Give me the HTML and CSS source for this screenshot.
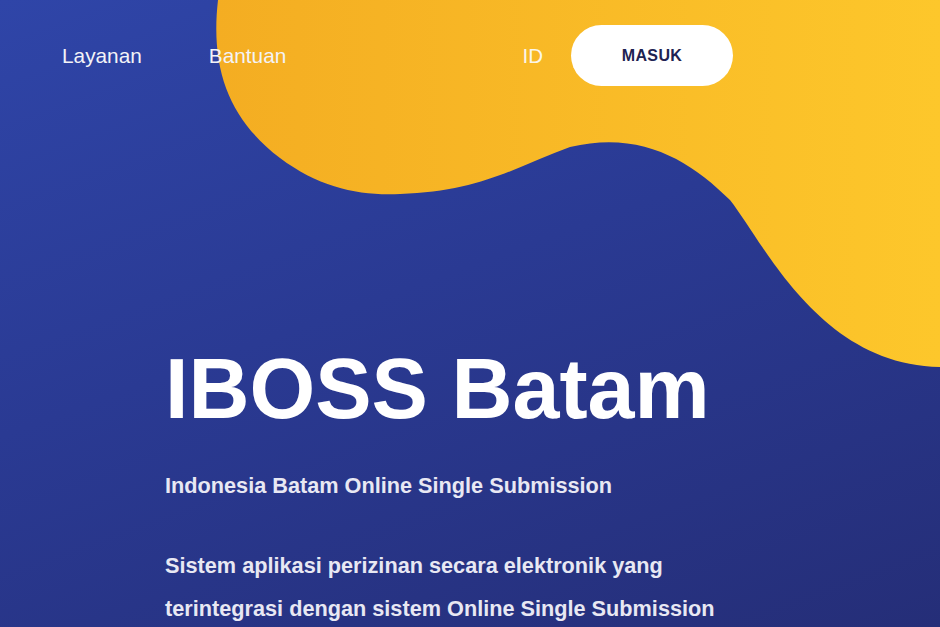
FILE: index.html
```html
<!DOCTYPE html>
<html lang="id">
<head>
<meta charset="utf-8">
<title>IBOSS Batam</title>
<link rel="stylesheet" href="styles.css">
</head>
<body>
<div class="hero">
  <svg class="blob" width="940" height="627" viewBox="0 0 940 627" aria-hidden="true">
    <defs>
      <linearGradient id="yel" x1="215" y1="0" x2="940" y2="0" gradientUnits="userSpaceOnUse">
        <stop offset="0" stop-color="#f4ad22"/>
        <stop offset="1" stop-color="#fdc72b"/>
      </linearGradient>
    </defs>
    <path fill="url(#yel)" d="M218,0 C210,70 230,120 280,158 C320,188 360,196 400,194 C480,192 520,165 570,147 C640,130 690,160 730,200 C765,245 820,365 940,367 L940,0 Z"/>
  </svg>
  <nav class="nav">
    <div class="nav-links">
      <a class="nav-link" href="#">Layanan</a>
      <a class="nav-link" href="#">Bantuan</a>
    </div>
    <div class="nav-right">
      <span class="lang">ID</span>
      <a class="btn-masuk" href="#">MASUK</a>
    </div>
  </nav>
  <main class="content">
    <h1 class="title">IBOSS Batam</h1>
    <p class="subtitle">Indonesia Batam Online Single Submission</p>
    <p class="desc">Sistem aplikasi perizinan secara elektronik yang terintegrasi dengan sistem Online Single Submission</p>
  </main>
</div>
</body>
</html>
```

FILE: styles.css
```css
html, body {
  margin: 0;
  padding: 0;
}
body {
  font-family: "Liberation Sans", Arial, sans-serif;
  overflow: hidden;
}
.hero {
  position: relative;
  width: 940px;
  height: 627px;
  overflow: hidden;
  background: linear-gradient(160deg, #2f45a8 0%, #2a3a93 45%, #252e78 100%);
}
.blob {
  position: absolute;
  left: 0;
  top: 0;
}
.nav {
  position: relative;
  display: flex;
  align-items: center;
  padding: 25px 207px 0 62px;
}
.nav-links {
  display: flex;
  gap: 67px;
}
.nav-link {
  color: #f3f3f7;
  text-decoration: none;
  font-size: 20.8px;
}
.nav-right {
  margin-left: auto;
  display: flex;
  align-items: center;
  gap: 28px;
}
.lang {
  color: #fbf6ea;
  font-size: 20.5px;
}
.btn-masuk {
  display: flex;
  align-items: center;
  justify-content: center;
  width: 162px;
  height: 61px;
  border-radius: 31px;
  background: #ffffff;
  color: #1e2352;
  font-weight: 700;
  font-size: 16px;
  letter-spacing: 0.4px;
  text-decoration: none;
}
.content {
  position: relative;
  padding-left: 165px;
  width: 560px;
}
.title {
  margin: 261px 0 0 0;
  font-size: 84.5px;
  line-height: 1;
  font-weight: 700;
  color: #ffffff;
}
.subtitle {
  margin: 41px 0 0 0;
  font-size: 21.7px;
  line-height: 25px;
  font-weight: 700;
  color: #e8e8f3;
}
.desc {
  margin: 46px 0 0 0;
  font-size: 21.7px;
  line-height: 43px;
  font-weight: 700;
  color: #e8e8f3;
}
```
